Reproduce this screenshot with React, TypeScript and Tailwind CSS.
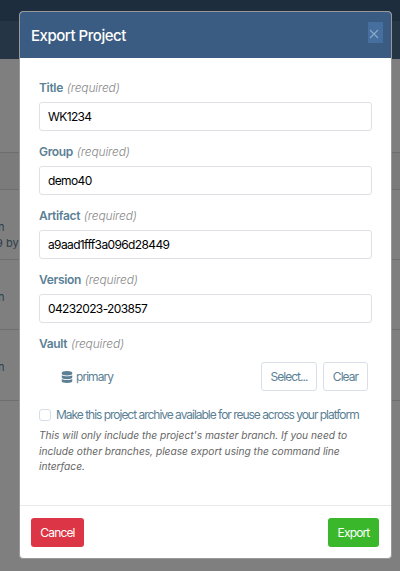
import { FaDatabase } from "react-icons/fa";

const fields = [
  { label: "Title", value: "WK1234" },
  { label: "Group", value: "demo40" },
  { label: "Artifact", value: "a9aad1fff3a096d28449" },
  { label: "Version", value: "04232023-203857" },
];

function FieldLabel({ text }: { text: string }) {
  return (
    <label className="block h-4 leading-4 text-[12px] font-semibold tracking-[-0.32px] text-[#5b7f95] whitespace-nowrap">
      {text} <span className="ml-px font-light italic tracking-[-0.15px] text-[#888]">(required)</span>
    </label>
  );
}

// Project list that sits behind the dialog
function ProjectsPage() {
  return (
    <div className="h-[571px] overflow-hidden bg-white text-[11px] leading-4 text-[#5b7f95]">
      <div className="h-[21px] bg-[#3a5a7c]" />
      <div className="h-[38px] bg-[#4b6b8d]" />
      <div className="h-[94px] border-b border-[#dcdcdc]" />
      <div className="h-[37px] border-b border-[#dcdcdc] bg-[#f6f6f6]" />
      <div className="h-[70px] border-b border-[#dcdcdc] pt-[29px]">
        <div className="-ml-[2px]">n</div>
        <div className="-ml-[4px]">9 by</div>
      </div>
      <div className="h-[70px] border-b border-[#dcdcdc] pt-[29px]">
        <div className="-ml-[2px]">n</div>
      </div>
      <div className="h-[71px] border-b border-[#dcdcdc] pt-[29px]">
        <div className="-ml-[2px]">n</div>
      </div>
    </div>
  );
}

export default function App() {
  return (
    <div className="relative h-[571px] w-[400px] overflow-hidden font-['Inter',sans-serif]">
      <ProjectsPage />

      <div className="absolute inset-0 bg-black/50 pl-[19px] pt-[11px]">
        <div className="flex h-[548px] w-[373px] flex-col overflow-hidden rounded-[4px] border border-[#999] bg-white">
          <div className="flex h-[46px] shrink-0 items-start justify-between bg-[#3a5c82] pl-[11px] pr-[8px]">
            <h5 className="pt-px text-[15px] font-medium leading-[45px] tracking-[-0.47px] text-white">Export Project</h5>
            <button className="mt-[10px] flex h-[21px] w-[15px] items-center justify-center bg-[#466f9f]">
              <svg viewBox="0 0 10 10" className="mr-[4px] mt-[3px] h-[10px] w-[10px] shrink-0" stroke="#8ba9ca" strokeWidth="1.1">
                <path d="M1 1l8 8M9 1L1 9" />
              </svg>
            </button>
          </div>

          <div className="grow pl-[19px] pr-[19px] pt-[22px]">
            {fields.map((field) => (
              <div key={field.label} className="h-16">
                <FieldLabel text={field.label} />
                <input
                  readOnly
                  value={field.value}
                  className="mt-[6px] block h-[29px] w-[333px] rounded-[3px] border border-[#dfdfe6] bg-white px-[8px] text-[12px] tracking-[-0.63px] text-black outline-none"
                />
              </div>
            ))}

            <FieldLabel text="Vault" />
            <div className="mt-[10px] flex h-[29px] items-center pl-[22px] pr-[4px] text-[12px] tracking-[-0.95px] text-[#5b7f95]">
              <FaDatabase className="h-[12px] w-[12px]" />
              <span className="ml-[3px]">primary</span>
              <button className="ml-auto h-[29px] w-[56px] rounded-[3px] border border-[#d9dee8]">Select...</button>
              <button className="ml-[6px] h-[29px] w-[45px] rounded-[3px] border border-[#d9dee8]">Clear</button>
            </div>

            <div className="mt-[16px] flex h-4 items-center whitespace-nowrap text-[12px] tracking-[-1.02px] text-[#5b7f95]">
              <span className="h-[12px] w-[12px] shrink-0 rounded-[3px] border border-[#d5dde6]" />
              <span className="ml-[5px]">Make this project archive available for reuse across your platform</span>
            </div>
            <p className="mt-[5px] whitespace-nowrap text-[10.2px] italic leading-[15.7px] text-[#666]">
              This will only include the project's master branch. If you need to
              <br />
              include other branches, please export using the command line
              <br />
              interface.
            </p>
          </div>

          <div className="flex h-[53px] shrink-0 justify-between border-t border-[#e9e9e9] pl-[11px] pr-3 pt-[12px] text-[12px] tracking-[-0.85px] text-white">
            <button className="h-[29px] w-[53px] rounded-[3px] bg-[#dc3545]">Cancel</button>
            <button className="h-[29px] w-[51px] rounded-[3px] bg-[#3bb72c]">Export</button>
          </div>
        </div>
      </div>
    </div>
  );
}
